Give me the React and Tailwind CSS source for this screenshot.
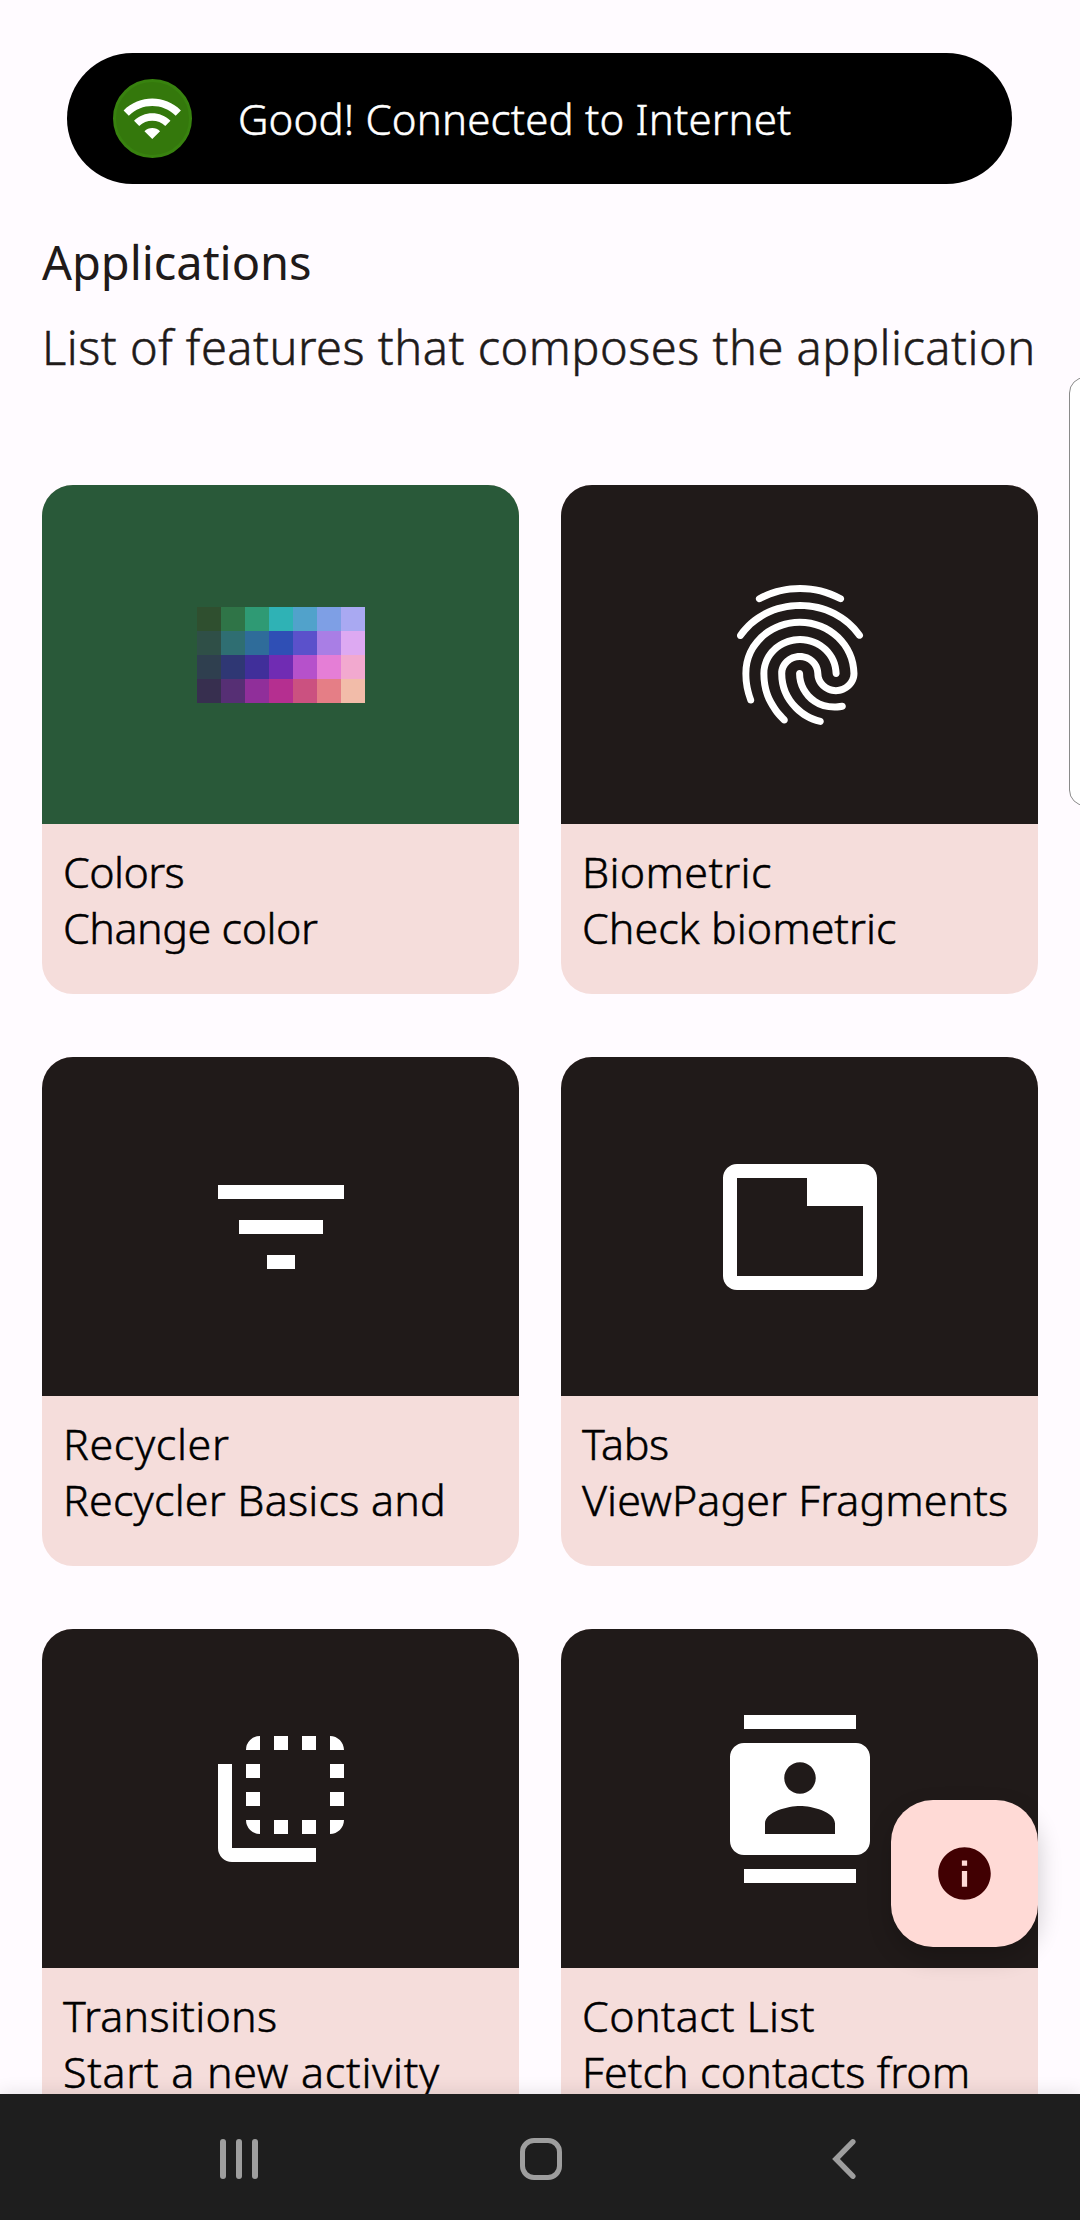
import { MdContacts, MdFilterList, MdFingerprint, MdFlipToBack, MdInfo, MdTab, MdWifi } from "react-icons/md";

const swatches = [
  "bg-[#2f4f2f]", "bg-[#2f7447]", "bg-[#2f9a74]", "bg-[#2fb2b5]", "bg-[#51a2cb]", "bg-[#7e9fe5]", "bg-[#a9a9f2]",
  "bg-[#2f4f47]", "bg-[#2f6e72]", "bg-[#2f6c9a]", "bg-[#2f4fb5]", "bg-[#5b51cb]", "bg-[#a97ee5]", "bg-[#dda9f2]",
  "bg-[#2f3f4f]", "bg-[#2f3774]", "bg-[#402f9a]", "bg-[#702cb3]", "bg-[#b651cb]", "bg-[#e57ed6]", "bg-[#f2a9cf]",
  "bg-[#372f4f]", "bg-[#562f74]", "bg-[#902f9a]", "bg-[#b52f90]", "bg-[#cb5180]", "bg-[#e57e86]", "bg-[#f2bca9]",
];

function Palette() {
  return (
    <div className="grid grid-cols-7">
      {swatches.map((color) => (
        <span key={color} className={`size-6 ${color}`} />
      ))}
    </div>
  );
}

const features = [
  { title: "Colors", titleClass: "tracking-[-0.6px]", text: "Change color", textClass: "tracking-[-0.45px]" },
  { title: "Biometric", titleClass: "tracking-[0.33px]", text: "Check biometric", textClass: "tracking-normal", Icon: MdFingerprint },
  { title: "Recycler", titleClass: "tracking-[0.66px]", text: "Recycler Basics and", textClass: "tracking-[0.2px]", Icon: MdFilterList },
  { title: "Tabs", titleClass: "tracking-[-0.4px]", text: "ViewPager Fragments", textClass: "tracking-[0.08px]", Icon: MdTab },
  { title: "Transitions", titleClass: "tracking-[0.27px]", text: "Start a new activity", textClass: "tracking-[0.72px]", Icon: MdFlipToBack },
  { title: "Contact List", titleClass: "tracking-[0.36px]", text: "Fetch contacts from", textClass: "tracking-[0.12px]", Icon: MdContacts },
];

function FeatureCard({ title, titleClass, text, textClass, Icon }) {
  return (
    <article className="h-[509px] overflow-hidden rounded-[31px] bg-[#f5dddb]">
      <div className={`flex h-[339px] items-center justify-center ${Icon ? "bg-[#201a19]" : "bg-[#295939]"}`}>
        {Icon ? <Icon className="size-[168px] text-white" /> : <Palette />}
      </div>
      <div className="px-[21px] pt-5 text-[43px] leading-[56px] font-light whitespace-nowrap text-black [-webkit-text-stroke:0.5px]">
        <h2 className={titleClass}>{title}</h2>
        <p className={textClass}>{text}</p>
      </div>
    </article>
  );
}

export default function App() {
  return (
    <div className="relative flex h-[2220px] w-[1080px] flex-col overflow-hidden bg-[#fffbff] font-['Noto_Sans',sans-serif]">
      <main className="min-h-0 flex-1 overflow-hidden pt-[53px]">
        <div className="ml-[67px] flex h-[131px] w-[945px] items-center rounded-full bg-black pl-[46px] text-white">
          <span className="flex size-[79px] items-center justify-center rounded-full border-3 border-[#38820f] bg-[#34780c]">
            <MdWifi className="size-[62.5px] shrink-0" />
          </span>
          <p className="ml-[46px] text-[42px] leading-[56px] font-light tracking-[0.18px] [-webkit-text-stroke:0.5px]">
            Good! Connected to Internet
          </p>
        </div>
        <header className="mt-[46px] px-[42px] whitespace-nowrap text-[#201a19]">
          <h1 className="text-[47px] leading-[64px] font-normal tracking-[-0.05px]">Applications</h1>
          <p className="mt-[21px] text-[47px] leading-[64px] font-light tracking-[0.5px] [-webkit-text-stroke:0.5px]">
            List of features that composes the application
          </p>
        </header>
        <section className="mt-[106px] grid grid-cols-2 gap-x-[42px] gap-y-[63px] px-[42px]">
          {features.map((feature) => (
            <FeatureCard key={feature.title} {...feature} />
          ))}
        </section>
      </main>

      <nav className="flex h-[126px] shrink-0 items-center justify-between bg-[#1e1e1e] pr-[224px] pl-[220px] text-[#9e9e9e] shadow-[0_0_18px_rgba(0,0,0,0.12)]">
        <div className="mt-[4px] flex h-[40px] w-[38px] justify-between">
          <span className="w-[6px] rounded-full bg-current" />
          <span className="w-[6px] rounded-full bg-current" />
          <span className="w-[6px] rounded-full bg-current" />
        </div>
        <span className="mt-[4px] ml-[-9px] h-[42px] w-[42px] rounded-[14px] border-[5.5px] border-current" />
        <svg className="mt-[4px] h-[42px] w-[24px]" viewBox="0 0 24 42" fill="none" stroke="currentColor" strokeWidth="5.5" strokeLinecap="round">
          <path d="M20.8 3.8 4 21l16.8 17.2" />
        </svg>
      </nav>

      <div className="absolute top-[377px] right-[-30px] h-[429px] w-[41px] rounded-2xl border border-[#8a8a8a] bg-white" />
      <button className="absolute top-[1800px] left-[891px] flex size-[147px] items-center justify-center rounded-[42px] bg-[#ffdad6] text-[#410002] shadow-[0_10px_24px_rgba(0,0,0,0.2)]">
        <MdInfo className="size-[63px]" />
      </button>
    </div>
  );
}
